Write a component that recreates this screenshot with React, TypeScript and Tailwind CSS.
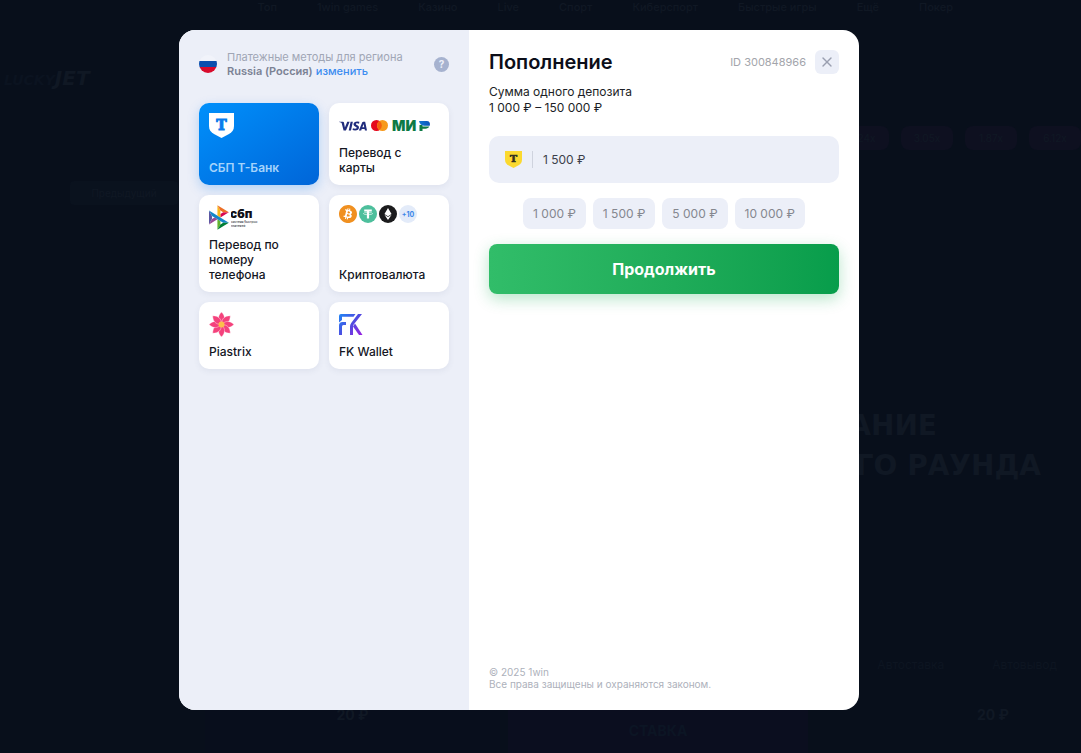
import { useState } from 'react';
import type { ReactNode } from 'react';
import { X } from 'lucide-react';
import { FaEthereum } from 'react-icons/fa';
import { SiBitcoin, SiVisa } from 'react-icons/si';

interface Method {
  id: string;
  title: string;
  logo: ReactNode;
}

const NAV_ITEMS = ['Топ', '1win games', 'Казино', 'Live', 'Спорт', 'Киберспорт', 'Быстрые игры', 'Ещё', 'Покер'];
const MULTIPLIERS = ['1.24x', '3.05x', '1.87x', '6.12x'];
const QUICK_AMOUNTS = ['1 000', '1 500', '5 000', '10 000'];

function ShieldLogo({ className, letterClassName }: { className: string; letterClassName: string }) {
  return (
    <svg viewBox="0 0 25 25" className={className} aria-hidden="true">
      <path d="M0 0h25v13c0 4-1.800 6.200-5 8L12.500 25 5 21c-3.200-1.800-5-4-5-8z" fill="currentColor" />
      <text
        x="12.5"
        y="16.5"
        textAnchor="middle"
        fontSize="14"
        fontWeight="700"
        strokeWidth="1"
        className={letterClassName}
      >
        T
      </text>
    </svg>
  );
}

function CardLogos() {
  return (
    <span className="flex h-[25px] items-center gap-1">
      <SiVisa className="size-7 text-[#202c7c]" aria-hidden="true" />
      <svg viewBox="0 0 17 11" className="h-[11px] w-[17px]" aria-hidden="true">
        <circle cx="5.5" cy="5.5" r="5.5" fill="#e5091c" />
        <circle cx="11.5" cy="5.5" r="5.5" fill="#f79a1c" />
        <path d="M8.500 1a5.500 5.500 0 0 1 0 9 5.500 5.500 0 0 1 0-9z" fill="#f5600f" />
      </svg>
      <svg viewBox="0 -4 40 20" className="h-5 w-10" aria-hidden="true">
        <defs>
          <linearGradient id="mir" x1="0" x2="1">
            <stop offset="0" stopColor="#1378d4" />
            <stop offset="1" stopColor="#0a54b8" />
          </linearGradient>
        </defs>
        <text x="0" y="11" fontSize="14" fontWeight="900" className="fill-[#0d7a45] font-['Inter']">
          МИ
        </text>
        <path d="M27.500 5h3v1.500h6.800c-.7 1.400-2 2.200-3.800 2.200h-3V11h-3z" fill="#0d7a45" />
        <path d="M27 1h7.700c2.600 0 3.700 2 3.100 4.700H32c-2.600 0-4.300-1.900-5-4.700z" fill="url(#mir)" />
      </svg>
    </span>
  );
}

function SbpLogo() {
  return (
    <span className="flex items-center gap-[2px]">
      <svg viewBox="0 0 98 120" className="h-[25px] w-5" aria-hidden="true">
        <path d="M0 26.120l14.532 25.975v15.844L.017 93.863z" fill="#5b57a2" />
        <path d="M55.797 42.643l13.617-8.346 27.868-.026-41.485 25.414z" fill="#d90751" />
        <path d="M55.720 25.967l.077 34.390-14.566-8.950V0z" fill="#fab718" />
        <path d="M97.282 34.271l-27.869.026-13.693-8.330L41.231 0z" fill="#ed6f26" />
        <path d="M55.797 94.007V77.322l-14.566-8.780.008 51.458z" fill="#63b22f" />
        <path d="M69.380 85.737L14.531 52.095 0 26.120l97.223 59.583z" fill="#1487c9" />
        <path d="M41.240 120l14.556-25.993 13.583-8.270 27.843-.034z" fill="#017f36" />
        <path d="M.017 93.863l41.333-25.320-13.896-8.526-12.922 7.922z" fill="#984995" />
      </svg>
      <svg viewBox="0 0 30 25" className="h-[25px] w-[30px]" aria-hidden="true">
        <text x="-1" y="13" fontSize="12" fontWeight="900" className="fill-[#101018] font-['Inter']">
          сбп
        </text>
        <text x="0" y="18" fontSize="3" fontWeight="500" className="fill-[#33333c] font-['Inter']">
          система быстрых
        </text>
        <text x="0" y="21.5" fontSize="3" fontWeight="500" className="fill-[#33333c] font-['Inter']">
          платежей
        </text>
      </svg>
    </span>
  );
}

function CryptoLogos() {
  return (
    <span className="flex items-center gap-[2px]">
      <span className="flex size-[18px] items-center justify-center rounded-full bg-white">
        <SiBitcoin className="size-[18px] text-[#f09020]" aria-hidden="true" />
      </span>
      <svg viewBox="0 0 18 18" className="size-[18px]" aria-hidden="true">
        <circle cx="9" cy="9" r="9" fill="#4dbf9c" />
        <path d="M5.200 4.600h7.600v2h-2.700v6.800H7.900V6.600H5.200z" fill="#fff" />
        <ellipse cx="9" cy="8.6" rx="4.6" ry="1.1" fill="none" stroke="#fff" strokeWidth=".6" />
      </svg>
      <span className="flex size-[18px] items-center justify-center rounded-full bg-[#1b1b1d]">
        <FaEthereum className="size-3 text-white" aria-hidden="true" />
      </span>
      <span className="flex size-[18px] items-center justify-center rounded-full bg-[#e3ebf9] text-[7px] font-bold text-[#3b86e8]">
        +10
      </span>
    </span>
  );
}

function PiastrixLogo() {
  const petals = [0, 45, 90, 135, 180, 225, 270, 315];

  return (
    <svg viewBox="0 0 25 25" className="size-[25px]" aria-hidden="true">
      {petals.map((angle) => (
        <path
          key={angle}
          d="M12.500 12C8.200 8.500 8.600 4 12.500 0c3.900 4 4.300 8.500 0 12z"
          fill="#f4427c"
          stroke="#fff"
          strokeWidth=".4"
          transform={`rotate(${angle} 12.5 12.5)`}
        />
      ))}
      <circle cx="12.5" cy="12.5" r="3" fill="#fcc04b" />
    </svg>
  );
}

function FkLogo() {
  return (
    <svg viewBox="0 0 24 25" className="h-[25px] w-6" aria-hidden="true">
      <defs>
        <linearGradient id="fk" x1="0" y1="2" x2="24" y2="23" gradientUnits="userSpaceOnUse">
          <stop offset="0" stopColor="#1f86f5" />
          <stop offset=".5" stopColor="#4f4be0" />
          <stop offset="1" stopColor="#9a1fe0" />
        </linearGradient>
      </defs>
      <g fill="url(#fk)">
        <path d="M2 2h14.500l-2 2.800H3V8L0 10.500V4q0-2 2-2z" />
        <path d="M3.500 10H7v3H4.500Q3 13 3 14.500V23H0v-9.500Q0 10 3.500 10z" />
        <path d="M19 2h4l-8.300 10.500q-.7 1-.7 2.300V23h-3v-8.500q0-2 1.200-3.500z" />
        <path d="M16 11.500L23.500 23H20l-6-8.500z" />
      </g>
    </svg>
  );
}

const METHODS: Method[] = [
  {
    id: 'sbp-tbank',
    title: 'СБП Т-Банк',
    logo: (
      <ShieldLogo
        className="size-[25px] text-white"
        letterClassName="fill-[#0a7cec] stroke-[#0a7cec] font-['DejaVu_Serif',serif]"
      />
    ),
  },
  { id: 'card', title: 'Перевод с карты', logo: <CardLogos /> },
  { id: 'sbp-phone', title: 'Перевод по номеру телефона', logo: <SbpLogo /> },
  { id: 'crypto', title: 'Криптовалюта', logo: <CryptoLogos /> },
  { id: 'piastrix', title: 'Piastrix', logo: <PiastrixLogo /> },
  { id: 'fk', title: 'FK Wallet', logo: <FkLogo /> },
];

// The game page, dimmed behind the modal
function Backdrop() {
  return (
    <div className="absolute inset-0 flex flex-col overflow-hidden text-[#101824]" aria-hidden="true">
      <div className="flex justify-end gap-10 pr-32 text-[11px] leading-[14px] font-medium">
        {NAV_ITEMS.map((item) => (
          <span key={item}>{item}</span>
        ))}
      </div>
      <div className="mt-[52px] pl-1 font-['DejaVu_Sans'] text-xl leading-6 font-bold italic">
        <span className="text-sm text-[#0b1320]">LUCKY</span>JET
      </div>
      <div className="mt-9 flex justify-end gap-3">
        {MULTIPLIERS.map((value) => (
          <span key={value} className="w-[52px] rounded-lg bg-[#0e1020] py-1 text-center text-[10px] leading-4">
            {value}
          </span>
        ))}
      </div>
      <div className="mt-[31px] ml-[70px] h-6 w-[108px] rounded bg-[#0a121e] text-center text-[10px] leading-6">
        Предыдущий
      </div>
      <div className="mt-[201px] pr-10 text-right font-['DejaVu_Sans'] text-[28px] leading-10 font-bold">
        <p className="pr-[104px]">ОЖИДАНИЕ</p>
        <p>СЛЕДУЮЩЕГО РАУНДА</p>
      </div>
      <div className="mt-auto flex justify-end gap-12 pr-6 pb-8 text-xs leading-4 text-[#0d1521]">
        <span>Автоставка</span>
        <span>Автовывод</span>
      </div>
      <div className="flex h-[48px] gap-2 pl-[205px] text-sm leading-5 font-bold">
        <p className="w-[295px] bg-[#080e1c] text-center">20 ₽</p>
        <p className="w-[300px] bg-[#0b0e1f] pt-4 text-center text-[#0c1524]">СТАВКА</p>
        <p className="flex-1 pr-[72px] text-right">20 ₽</p>
      </div>
    </div>
  );
}

export default function App() {
  const [selected, setSelected] = useState('sbp-tbank');
  const [amount, setAmount] = useState('1 500 ₽');

  return (
    <div className="relative flex min-h-screen items-center justify-center bg-[#080f1b] pr-[43px] pb-[13px] font-['Inter',sans-serif]">
      <Backdrop />

      <div
        role="dialog"
        aria-labelledby="deposit-title"
        className="relative flex min-h-[680px] w-full max-w-[680px] overflow-hidden rounded-2xl bg-white"
      >
        <aside className="w-[290px] shrink-0 bg-[#eceff8] p-5">
          <div className="flex items-center gap-[10px]">
            <svg viewBox="0 0 18 18" className="size-[18px]" aria-hidden="true">
              <clipPath id="flag">
                <circle cx="9" cy="9" r="9" />
              </clipPath>
              <g clipPath="url(#flag)">
                <path d="M0 0h18v6H0z" fill="#f1f3fa" />
                <path d="M0 6h18v6H0z" fill="#0b4fae" />
                <path d="M0 12h18v6H0z" fill="#d80b2c" />
              </g>
            </svg>
            <p className="flex-1 text-[11px] leading-[14px] text-[#a0a6b5]">
              Платежные методы для региона
              <br />
              <span className="font-semibold text-[#7b8294]">Russia (Россия)</span>{' '}
              <a href="#region" className="font-medium text-[#3b8cf0]">
                изменить
              </a>
            </p>
            <button
              type="button"
              aria-label="Помощь"
              className="flex size-[15px] items-center justify-center rounded-full bg-[#a6b2cf] text-[10px] font-bold text-[#eceff8]"
            >
              ?
            </button>
          </div>

          <div className="mt-[25px] grid grid-cols-2 gap-[10px]">
            {METHODS.map((method) => (
              <button
                key={method.id}
                type="button"
                aria-pressed={selected === method.id}
                onClick={() => setSelected(method.id)}
                className={`flex flex-col items-start justify-between gap-[7px] rounded-[10px] p-[10px] text-left text-xs leading-[15px] ${
                  selected === method.id
                    ? 'bg-linear-to-br from-[#0090fb] to-[#0065d8] font-semibold text-[#a5d3fb] shadow-[0_4px_12px_rgba(0,120,240,0.25)]'
                    : 'bg-white font-medium text-[#14161f] shadow-[0_2px_6px_rgba(60,80,120,0.08)]'
                }`}
              >
                <span className="flex h-[25px] items-start">{method.logo}</span>
                <span>{method.title}</span>
              </button>
            ))}
          </div>
        </aside>

        <main className="flex min-w-0 flex-1 flex-col p-5">
          <div className="flex items-center">
            <h1 id="deposit-title" className="flex-1 text-xl leading-6 font-semibold text-[#0c0e19]">
              Пополнение
            </h1>
            <span className="text-[11px] text-[#a3a5ab]">ID 300848966</span>
            <button
              type="button"
              aria-label="Закрыть"
              className="ml-[9px] flex size-6 items-center justify-center rounded-md bg-[#eceff8] text-[#9a9fb0]"
            >
              <X className="size-4" strokeWidth={2} />
            </button>
          </div>

          <p className="mt-[10px] text-xs leading-4 text-[#1c1e26]">
            Сумма одного депозита
            <br />1 000 ₽ – 150 000 ₽
          </p>

          <form onSubmit={(e) => e.preventDefault()} className="mt-5 flex flex-col gap-[15px]">
            <div className="flex h-[47px] items-center rounded-[10px] bg-[#eceff8] px-4">
              <ShieldLogo
                className="size-[17px] text-[#fbd92f]"
                letterClassName="fill-[#33321f] stroke-[#33321f] font-['DejaVu_Serif',serif]"
              />
              <span className="mx-[10px] h-[17px] w-px bg-[#cfd3de]" />
              <input
                type="text"
                aria-label="Сумма депозита"
                value={amount}
                onChange={(e) => setAmount(e.target.value)}
                className="min-w-0 flex-1 bg-transparent text-xs text-[#3c3f4a] outline-none"
              />
            </div>

            <div className="flex justify-center gap-[7px]">
              {QUICK_AMOUNTS.map((value) => (
                <button
                  key={value}
                  type="button"
                  onClick={() => setAmount(`${value} ₽`)}
                  className="h-[31px] rounded-lg bg-[#eceff8] px-[10px] text-xs text-[#85878f]"
                >
                  {value} ₽
                </button>
              ))}
            </div>

            <button
              type="submit"
              className="h-[50px] rounded-lg bg-linear-to-r from-[#31bd69] to-[#079d4b] text-base font-bold text-white shadow-[0_5px_15px_rgba(20,170,80,0.3)]"
            >
              Продолжить
            </button>
          </form>

          <footer className="mt-auto text-[10px] leading-3 text-[#adb1bb]">
            © 2025 1win
            <br />
            Все права защищены и охраняются законом.
          </footer>
        </main>
      </div>
    </div>
  );
}
